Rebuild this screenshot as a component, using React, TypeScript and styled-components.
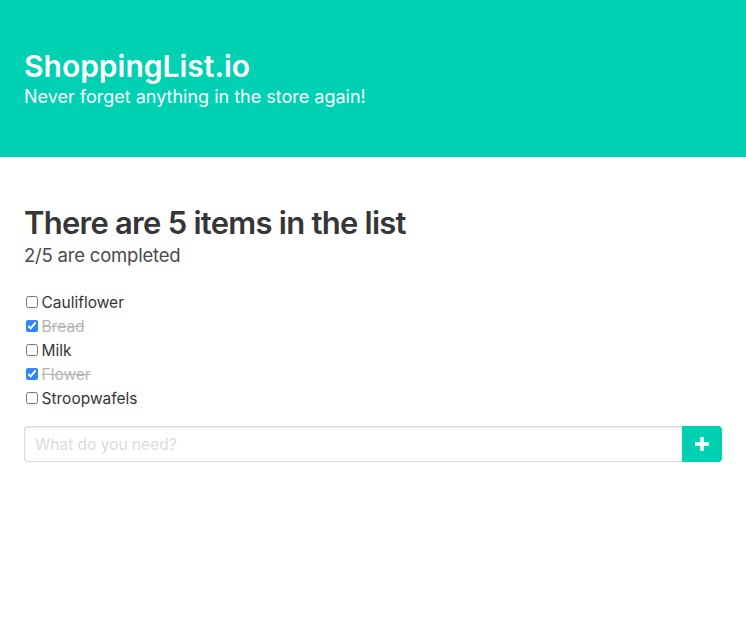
import React, { useState } from "react";
import styled, { createGlobalStyle } from "styled-components";

const Global = createGlobalStyle`
  html, body { margin: 0; padding: 0; background: #fff; }
  body { font-family: Inter, "Noto Sans", sans-serif; color: #4a4a4a; }
  * { box-sizing: border-box; }
`;

const Hero = styled.header`
  background: #00d1b2;
  padding: 48px 24px;
  display: flex;
  flex-direction: column;
`;

const HeroTitle = styled.h1`
  margin: 0;
  color: #fff;
  font-size: 30px;
  font-weight: 600;
  line-height: 36px;
`;

const HeroSubtitle = styled.h2`
  margin: 0;
  color: #fff;
  font-size: 18px;
  font-weight: 400;
  line-height: 25px;
`;

const Section = styled.main`
  padding: 48px 24px;
  display: flex;
  flex-direction: column;
`;

const Heading = styled.h3`
  margin: 0;
  color: #363636;
  font-size: 31px;
  font-weight: 600;
  line-height: 36px;
  letter-spacing: -0.75px;
`;

const Sub = styled.p`
  margin: 0 0 21px;
  color: #4a4a4a;
  font-size: 18.5px;
  line-height: 28px;
  letter-spacing: -0.2px;
`;

const List = styled.ul`
  list-style: none;
  margin: 0 0 16px;
  padding: 0;
`;

const Item = styled.li`
  display: flex;
  align-items: center;
  gap: 4px;
  height: 24px;
  font-size: 15.5px;
  color: #363636;
`;

const Check = styled.input`
  margin: 0 0 0 1.5px;
  width: 12px;
  height: 12px;
  accent-color: #2f86f6;
`;

const Label = styled.span<{ $done: boolean }>`
  color: ${(p) => (p.$done ? "#b5b5b5" : "#363636")};
  text-decoration: ${(p) => (p.$done ? "line-through" : "none")};
`;

const Form = styled.form`
  display: flex;
  width: 698px;
`;

const Input = styled.input`
  flex: 1;
  height: 36px;
  border: 1px solid #dbdbdb;
  border-right: none;
  border-radius: 4px 0 0 4px;
  box-shadow: inset 0 1px 2px rgba(10, 10, 10, 0.1);
  padding: 0 10px;
  font-family: inherit;
  font-size: 15.5px;
  color: #363636;
  outline: none;
  &::placeholder { color: #dbdbdb; }
`;

const AddButton = styled.button`
  width: 40px;
  height: 36px;
  border: none;
  border-radius: 0 4px 4px 0;
  background: #00d1b2;
  display: flex;
  align-items: center;
  justify-content: center;
  padding: 0;
  cursor: pointer;
`;

const initial = [
  { name: "Cauliflower", done: false },
  { name: "Bread", done: true },
  { name: "Milk", done: false },
  { name: "Flower", done: true },
  { name: "Stroopwafels", done: false },
];

export default function App() {
  const [items, setItems] = useState(initial);
  const completed = items.filter((i) => i.done).length;
  return (
    <>
      <Global />
      <Hero>
        <HeroTitle>ShoppingList.io</HeroTitle>
        <HeroSubtitle>Never forget anything in the store again!</HeroSubtitle>
      </Hero>
      <Section>
        <Heading>There are {items.length} items in the list</Heading>
        <Sub>
          {completed}/{items.length} are completed
        </Sub>
        <List>
          {items.map((it, idx) => (
            <Item key={it.name}>
              <Check
                type="checkbox"
                checked={it.done}
                onChange={() =>
                  setItems(items.map((x, j) => (j === idx ? { ...x, done: !x.done } : x)))
                }
              />
              <Label $done={it.done}>{it.name}</Label>
            </Item>
          ))}
        </List>
        <Form onSubmit={(e) => e.preventDefault()}>
          <Input placeholder="What do you need?" />
          <AddButton type="submit" aria-label="Add">
            <svg width="14" height="14" viewBox="0 0 14 14">
              <path d="M5.25 0h3.5v5.25H14v3.5H8.75V14h-3.5V8.75H0v-3.5h5.25z" fill="#fff" />
            </svg>
          </AddButton>
        </Form>
      </Section>
    </>
  );
}
